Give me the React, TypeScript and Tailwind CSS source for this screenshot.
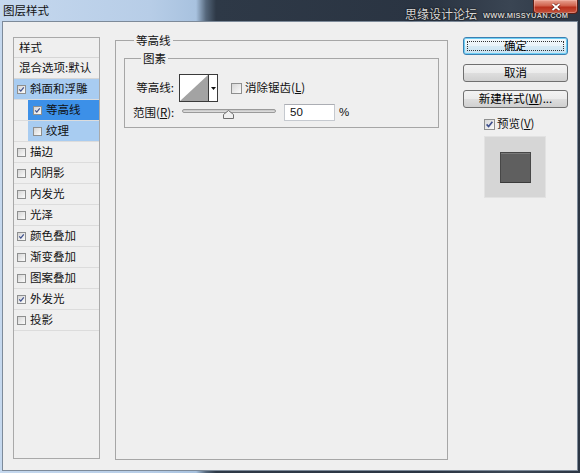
import React from 'react'

type Item = { label: string; checked: boolean; level?: 0 | 1; tone?: 'none' | 'light' | 'strong' }

const items: Item[] = [
    { label: '斜面和浮雕', checked: true, tone: 'light' },
    { label: '等高线', checked: true, level: 1, tone: 'strong' },
    { label: '纹理', checked: false, level: 1, tone: 'light' },
    { label: '描边', checked: false },
    { label: '内阴影', checked: false },
    { label: '内发光', checked: false },
    { label: '光泽', checked: false },
    { label: '颜色叠加', checked: true },
    { label: '渐变叠加', checked: false },
    { label: '图案叠加', checked: false },
    { label: '外发光', checked: true },
    { label: '投影', checked: false },
]

function CheckBox({ checked, big }: { checked: boolean; big?: boolean }) {
    return (
        <span
            className={`${big ? 'w-[11px] h-[11px]' : 'w-[9px] h-[9px]'} shrink-0 border border-[#8e8f8f] bg-[linear-gradient(135deg,#d6d6d6,#fbfbfb)] flex items-center justify-center`}
        >
            {checked && (
                <svg viewBox="0 0 9 9" className="w-full h-full">
                    <path d="M1.6 4.4 L3.6 6.6 L7.4 1.8" fill="none" stroke="#3d4f8c" strokeWidth="1.6" />
                </svg>
            )}
        </span>
    )
}

function Button({ children, primary }: { children: React.ReactNode; primary?: boolean }) {
    return (
        <div
            className={`relative w-[105px] h-[18px] rounded-[3px] border flex items-center justify-center text-[11.5px] leading-none text-black ${primary
                ? 'border-[#3c7fb1] shadow-[inset_0_0_0_1px_#6fd0f5] bg-[linear-gradient(#f4f9fc,#e9f3f9_50%,#d7ebf6_51%,#c9e2f2)]'
                : 'border-[#707070] bg-[linear-gradient(#f3f3f3,#ebebeb_50%,#dedede_51%,#d0d0d0)]'
                }`}
        >
            {primary && <span className="absolute inset-[3px] border border-dotted border-[#333]" />}
            {children}
        </div>
    )
}

export default function App() {
    return (
        <div className="w-[580px] h-[473px] overflow-hidden relative flex flex-col bg-[linear-gradient(90deg,#c5d8ee_0px,#b7cde7_150px,#a8c2df_196px,#55677b_206px,#2e3947_216px,#2a3442_430px,#3a4553_510px,#2c3644_580px)] font-['Noto_Sans_CJK_SC','Liberation_Sans',sans-serif]">
            {/* title bar */}
            <div className="h-[21px] shrink-0 flex items-center pl-[3px]">
                <span className="text-[11.5px] leading-none text-[#111]">图层样式</span>
            </div>
            <div className="absolute right-[2px] top-0 w-[45px] h-[14px] rounded-b-[4px] border border-t-0 border-[#5e1e15] bg-[linear-gradient(#e8a392,#d0614c_45%,#b8301c_55%,#c8533c)] shadow-[inset_0_0_0_1px_rgba(255,200,190,0.4)] flex items-center justify-center">
                <svg viewBox="0 0 10 8" className="w-[10px] h-[8px]">
                    <path d="M1.5 1 L8.5 7 M8.5 1 L1.5 7" stroke="#6b1a10" strokeWidth="3" />
                    <path d="M1.5 1 L8.5 7 M8.5 1 L1.5 7" stroke="#fff" strokeWidth="1.8" />
                </svg>
            </div>
            <div className="absolute left-[405px] top-[8px] flex items-end gap-[6px] [text-shadow:0_0_2px_#111,0_0_1px_#000]">
                <span className="text-[12px] leading-none text-[#d8d8d8]">思缘设计论坛</span>
                <span className="text-[7.5px] leading-none font-['Liberation_Sans',sans-serif] font-bold text-[#cfcfcf] tracking-[0.2px] mb-[1px]">WWW.MISSYUAN.COM</span>
            </div>

            {/* body */}
            <div className="h-[450px] mx-[2px] border border-[#7d8a99] bg-[#efefef] flex items-start pl-[10px]">
                {/* style list */}
                <div className="mt-[15px] w-[87px] h-[422px] border border-[#a9a9a9] flex flex-col text-[11.5px] leading-none text-[#111]">
                    <div className="h-[20px] shrink-0 border-b border-[#d6d6d6] flex items-center pl-[5px]">样式</div>
                    <div className="h-[21px] shrink-0 border-b border-[#d6d6d6] flex items-center pl-[5px] whitespace-nowrap">混合选项:默认</div>
                    {items.map((it) => (
                        <div key={it.label} className="h-[21px] shrink-0 border-b border-[#dcdcdc] flex">
                            <div
                                className={`flex-1 flex items-center gap-[4px] whitespace-nowrap ${it.level === 1 ? 'ml-[14px] pl-[5px]' : 'pl-[3px]'} ${it.tone === 'strong'
                                    ? 'bg-[#3c90e8]'
                                    : it.tone === 'light'
                                        ? 'bg-[#a8ccf1]'
                                        : ''
                                    }`}
                            >
                                <CheckBox checked={it.checked} />
                                <span>{it.label}</span>
                            </div>
                        </div>
                    ))}
                </div>

                {/* contour group */}
                <fieldset className="mt-[10px] ml-[15px] w-[333px] h-[428px] border border-[#a6a6a6] px-[8px] pt-[2px]">
                    <legend className="ml-[10px] px-[2px] text-[11.5px] leading-[16px] text-[#111]">等高线</legend>
                    <fieldset className="border border-[#a6a6a6] px-[8px] pb-[6px]">
                        <legend className="ml-[8px] px-[2px] text-[11.5px] leading-[16px] text-[#111]">图素</legend>
                        <div className="mt-[8px] flex items-center text-[11.5px] leading-none text-[#111]">
                            <span className="w-[41px] text-right whitespace-nowrap">等高线:</span>
                            <div className="ml-[5px] w-[39px] h-[28px] flex border border-[#3a3a3a] bg-white">
                                <svg viewBox="0 0 28 26" className="w-[28px] h-[26px]">
                                    <polygon points="0,26 28,0 28,26" fill="#a3a3a3" />
                                </svg>
                                <div className="flex-1 border-l border-[#3a3a3a] flex items-center justify-center">
                                    <svg viewBox="0 0 5 3" className="w-[5px] h-[3px]">
                                        <polygon points="0,0 5,0 2.5,3" fill="#111" />
                                    </svg>
                                </div>
                            </div>
                            <div className="ml-[13px]">
                                <CheckBox checked={false} big />
                            </div>
                            <span className="ml-[3px]">
                                消除锯齿(<span className="underline">L</span>)
                            </span>
                        </div>
                        <div className="mt-[2px] flex items-center text-[11.5px] leading-none text-[#111]">
                            <span className="w-[41px] text-right whitespace-nowrap">
                                范围(<span className="underline">R</span>):
                            </span>
                            <div className="relative ml-[8px] w-[94px] h-[17px]">
                                <div className="absolute left-0 right-0 top-[5px] h-[4px] rounded-[2px] border border-[#9a9a9a] bg-[linear-gradient(#c4c4c4,#e2e2e2)]" />
                                <svg viewBox="0 0 11 9" className="absolute left-[41px] top-[6px] w-[11px] h-[9px]">
                                    <path d="M0.5 8.5 L0.5 4.5 L5.5 0.5 L10.5 4.5 L10.5 8.5 Z" fill="#f0f0f0" stroke="#6e6e6e" />
                                </svg>
                            </div>
                            <div className="ml-[8px] w-[51px] h-[17px] border border-[#c5c9cf] border-t-[#abadb3] bg-white flex items-center pl-[5px] font-['Liberation_Sans',sans-serif]">
                                50
                            </div>
                            <span className="ml-[4px] font-['Liberation_Sans',sans-serif]">%</span>
                        </div>
                    </fieldset>
                </fieldset>

                {/* right column */}
                <div className="mt-[15px] ml-[15px] flex flex-col">
                    <Button primary>确定</Button>
                    <div className="mt-[9px]">
                        <Button>取消</Button>
                    </div>
                    <div className="mt-[8px]">
                        <Button>
                            新建样式(<span className="underline">W</span>)...
                        </Button>
                    </div>
                    <div className="mt-[8px] ml-[21px] h-[16px] flex items-center gap-[2px] text-[11.5px] leading-none text-[#111]">
                        <CheckBox checked big />
                        <span>
                            预览(<span className="underline">V</span>)
                        </span>
                    </div>
                    <div className="mt-[4px] ml-[21px] w-[62px] h-[62px] border border-[#e2e2e2] bg-[#d6d6d6] flex items-center justify-center">
                        <div className="w-[31px] h-[31px] bg-[#5f5f5f] border border-[#474747] border-b-[#3a3a3a] shadow-[inset_0_1px_0_#7a7a7a]" />
                    </div>
                </div>
            </div>
        </div>
    )
}
